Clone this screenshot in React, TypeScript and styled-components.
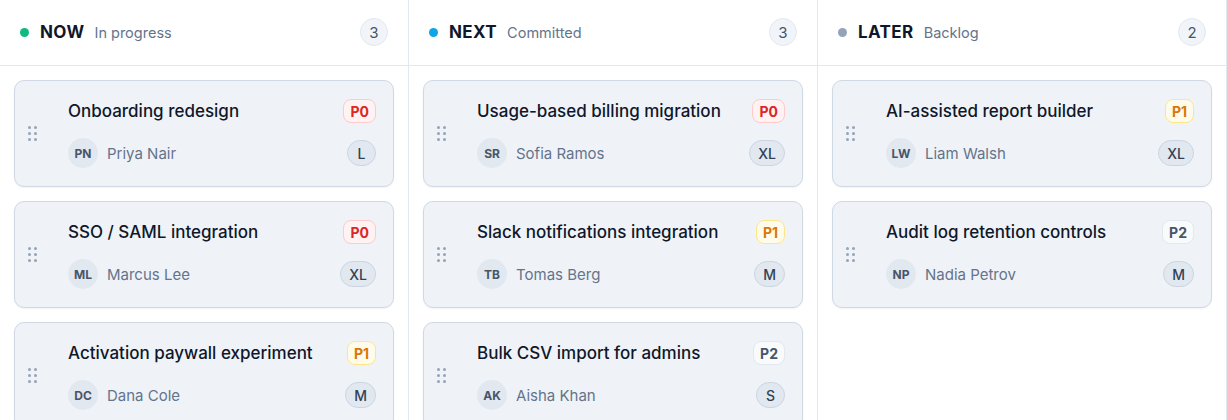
import React from 'react'
import styled, { createGlobalStyle } from 'styled-components'

const GlobalStyle = createGlobalStyle`
  html, body {
    margin: 0;
    padding: 0;
    background: #ffffff;
    overflow: hidden;
  }
  body {
    font-family: Inter, "Noto Sans", "Liberation Sans", sans-serif;
    color: #0f172a;
  }
`

type Priority = 'P0' | 'P1' | 'P2'

interface Item {
  title: string
  priority: Priority
  initials: string
  owner: string
  size: string
}

interface Lane {
  key: string
  label: string
  sub: string
  dot: string
  items: Item[]
}

const lanes: Lane[] = [
  {
    key: 'now',
    label: 'NOW',
    sub: 'In progress',
    dot: '#10b981',
    items: [
      { title: 'Onboarding redesign', priority: 'P0', initials: 'PN', owner: 'Priya Nair', size: 'L' },
      { title: 'SSO / SAML integration', priority: 'P0', initials: 'ML', owner: 'Marcus Lee', size: 'XL' },
      { title: 'Activation paywall experiment', priority: 'P1', initials: 'DC', owner: 'Dana Cole', size: 'M' }
    ]
  },
  {
    key: 'next',
    label: 'NEXT',
    sub: 'Committed',
    dot: '#0ea5e9',
    items: [
      { title: 'Usage-based billing migration', priority: 'P0', initials: 'SR', owner: 'Sofia Ramos', size: 'XL' },
      { title: 'Slack notifications integration', priority: 'P1', initials: 'TB', owner: 'Tomas Berg', size: 'M' },
      { title: 'Bulk CSV import for admins', priority: 'P2', initials: 'AK', owner: 'Aisha Khan', size: 'S' }
    ]
  },
  {
    key: 'later',
    label: 'LATER',
    sub: 'Backlog',
    dot: '#94a3b8',
    items: [
      { title: 'AI-assisted report builder', priority: 'P1', initials: 'LW', owner: 'Liam Walsh', size: 'XL' },
      { title: 'Audit log retention controls', priority: 'P2', initials: 'NP', owner: 'Nadia Petrov', size: 'M' }
    ]
  }
]

const priorityColors: Record<Priority, { fg: string; bg: string; border: string }> = {
  P0: { fg: '#dc2626', bg: '#fef2f2', border: '#fecaca' },
  P1: { fg: '#d97706', bg: '#fffbeb', border: '#fde68a' },
  P2: { fg: '#475569', bg: '#f8fafc', border: '#e2e8f0' }
}

const Board = styled.div`
  display: grid;
  grid-template-columns: repeat(3, 409px);
  min-height: 420px;
`

const Column = styled.section`
  display: flex;
  flex-direction: column;
  border-right: 1px solid #e2e8f0;
`

const Header = styled.header`
  display: flex;
  align-items: center;
  height: 66px;
  padding: 0 20px 1px;
  border-bottom: 1px solid #e2e8f0;
  box-sizing: border-box;
`

const Dot = styled.span<{ $color: string }>`
  width: 9px;
  height: 9px;
  border-radius: 50%;
  background: ${(p) => p.$color};
  margin-right: 11px;
`

const LaneLabel = styled.span`
  font-size: 17px;
  font-weight: 700;
  letter-spacing: 0.4px;
  color: #0f172a;
  margin-right: 10px;
`

const LaneSub = styled.span`
  font-size: 14.5px;
  color: #64748b;
`

const Count = styled.span`
  margin-left: auto;
  width: 28px;
  height: 28px;
  border-radius: 50%;
  background: #f1f5f9;
  border: 1px solid #e2e8f0;
  box-sizing: border-box;
  display: flex;
  align-items: center;
  justify-content: center;
  font-size: 15px;
  color: #475569;
`

const CardList = styled.div`
  display: flex;
  flex-direction: column;
  gap: 14px;
  padding: 14px 14px 0;
`

const Card = styled.article`
  display: flex;
  align-items: center;
  height: 107px;
  box-sizing: border-box;
  padding: 0 17px 0 13px;
  background: #eff3f8;
  border: 1px solid #cfd8e3;
  border-radius: 10px;
  box-shadow: 0 1px 2px rgba(15, 23, 42, 0.05);
`

const Handle = styled.div`
  display: grid;
  grid-template-columns: repeat(2, 3px);
  grid-auto-rows: 3px;
  gap: 3px;
  margin-right: 31px;
  & > span {
    width: 3px;
    height: 3px;
    border-radius: 50%;
    background: #94a3b8;
  }
`

const Body = styled.div`
  flex: 1;
  display: flex;
  flex-direction: column;
  gap: 15px;
`

const TitleRow = styled.div`
  display: flex;
  align-items: center;
  justify-content: space-between;
  height: 24px;
`

const Title = styled.span`
  font-size: 17px;
  font-weight: 500;
  color: #0f172a;
`

const PriorityTag = styled.span<{ $p: Priority }>`
  height: 24px;
  box-sizing: border-box;
  padding: 0 6px;
  display: flex;
  align-items: center;
  border-radius: 8px;
  font-size: 14px;
  font-weight: 700;
  color: ${(p) => priorityColors[p.$p].fg};
  background: ${(p) => priorityColors[p.$p].bg};
  border: 1px solid ${(p) => priorityColors[p.$p].border};
`

const MetaRow = styled.div`
  display: flex;
  align-items: center;
  height: 30px;
`

const Avatar = styled.span`
  width: 30px;
  height: 30px;
  border-radius: 50%;
  background: #e2e8f0;
  display: flex;
  align-items: center;
  justify-content: center;
  font-size: 12px;
  font-weight: 700;
  color: #475569;
  margin-right: 9px;
`

const Owner = styled.span`
  font-size: 15px;
  color: #64748b;
`

const SizeChip = styled.span`
  margin-left: auto;
  min-width: 29px;
  height: 26px;
  box-sizing: border-box;
  padding: 0 8px;
  border-radius: 999px;
  background: #e2e8f0;
  border: 1px solid #cbd5e1;
  display: flex;
  align-items: center;
  justify-content: center;
  font-size: 14px;
  font-weight: 500;
  color: #334155;
`

const DragHandle = () => (
  <Handle>
    {Array.from({ length: 6 }).map((_, i) => (
      <span key={i} />
    ))}
  </Handle>
)

const RoadmapCard = ({ item }: { item: Item }) => (
  <Card>
    <DragHandle />
    <Body>
      <TitleRow>
        <Title>{item.title}</Title>
        <PriorityTag $p={item.priority}>{item.priority}</PriorityTag>
      </TitleRow>
      <MetaRow>
        <Avatar>{item.initials}</Avatar>
        <Owner>{item.owner}</Owner>
        <SizeChip>{item.size}</SizeChip>
      </MetaRow>
    </Body>
  </Card>
)

const App = () => {
  return (
    <>
      <GlobalStyle />
      <Board>
        {lanes.map((lane) => (
          <Column key={lane.key}>
            <Header>
              <Dot $color={lane.dot} />
              <LaneLabel>{lane.label}</LaneLabel>
              <LaneSub>{lane.sub}</LaneSub>
              <Count>{lane.items.length}</Count>
            </Header>
            <CardList>
              {lane.items.map((item) => (
                <RoadmapCard key={item.title} item={item} />
              ))}
            </CardList>
          </Column>
        ))}
      </Board>
    </>
  )
}

export default App
